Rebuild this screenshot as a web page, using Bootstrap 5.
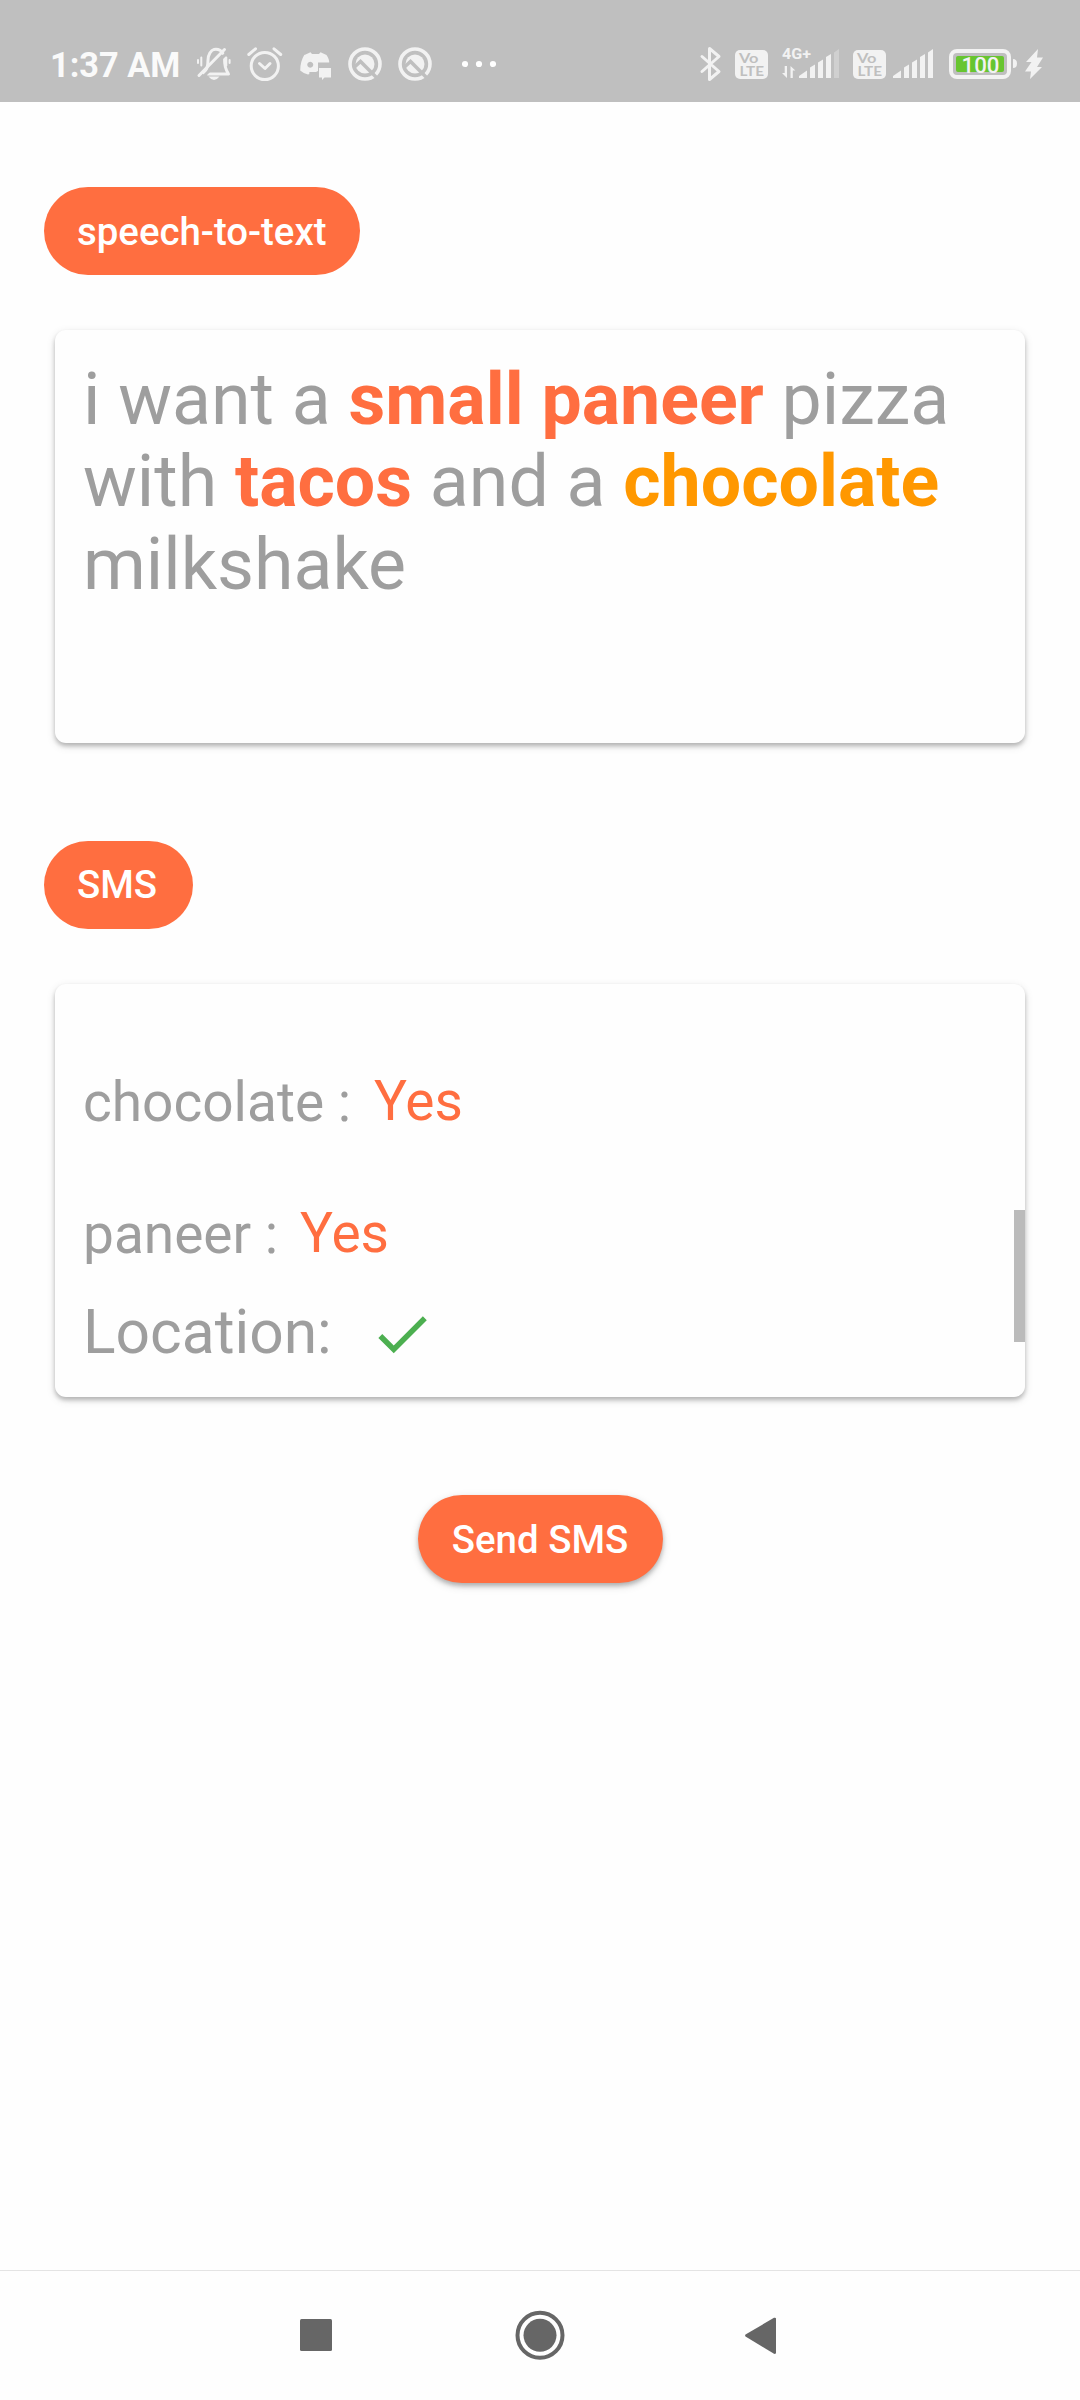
<!DOCTYPE html>
<html lang="en">
<head>
<meta charset="utf-8">
<meta name="viewport" content="width=device-width, initial-scale=1">
<title>Speech to SMS</title>
<link href="https://cdn.jsdelivr.net/npm/bootstrap@5.3.0/dist/css/bootstrap.min.css" rel="stylesheet">
<style>
  body { font-family: Roboto, "Liberation Sans", sans-serif; background: #fefefe; color: #9e9e9e; }
  .screen { height: 2400px; overflow: hidden; }
  .status { height: 102px; background: #bfbfbf; padding: 42px 36px 0 50px; }
  .status svg { display: block; height: 44px; fill: #f2f2f2; flex: none; }
  .clock { font-size: 34.3px; font-weight: 700; line-height: 40px; color: #fafafa; width: 146px; white-space: nowrap; margin-top: 3px; }
  .line { fill: none; stroke: #f2f2f2; stroke-width: 3; stroke-linecap: round; stroke-linejoin: round; }
  .gap { stroke: #bfbfbf; fill: none; }
  .gap-6 { margin-left: 6px; }
  .gap-13 { margin-left: 13px; }
  .gap-14 { margin-left: 14px; }
  .gap-15 { margin-left: 15px; }
  .gap-17 { margin-left: 17px; }
  .gap-30 { margin-left: 30px; }
  .content-area { padding-top: 85px; }
  .pill { height: 88px; line-height: 89px; padding: 0 33px; border-radius: 44px; background: #ff6e40; color: #fff; font-size: 38.4px; font-weight: 500; margin-left: 44px; border: 0; white-space: nowrap; }
  .pill-speech { width: 316px; }
  .pill-sms { width: 148.5px; margin-top: 98.8px; line-height: 88px; }
  .panel { margin: 54.5px 55px 0; height: 413px; border: 0; border-radius: 11px; background: #fefefe; padding: 0 28px;
    box-shadow: 0 3px 4px rgba(0,0,0,.22), 0 3px 10px rgba(0,0,0,.12); }
  .spoken { font-size: 71.65px; line-height: 82.5px; margin: 0; padding-top: 29px; }
  .hit { color: #ff6e40; }
  .spoken .hit, .drink { font-weight: 700; }
  .drink { color: #ff9800; }
  .results { padding-top: 85px; }
  .entry { font-size: 55px; line-height: 66px; height: 132px; }
  .entry-last { height: 99px; }
  .entry .hit { margin: -1px 0 0 23px; }
  .entry-last .hit { margin-left: 22px; }
  .place { font-size: 60.5px; line-height: 66px; }
  .check { margin: 1px 0 0 37px; }
  .thumb { width: 11px; height: 132.5px; top: 226px; right: 0; background: #bbb; }
  .send { width: 245px; padding: 0 32px; margin-left: 0; margin-top: 98.5px; box-shadow: 0 3px 4px rgba(0,0,0,.22), 0 3px 10px rgba(0,0,0,.14); }
  .sysnav { height: 130px; border-top: 1px solid #e4e4e4; padding: 38px 295px 0 292px; }
  .sysnav svg { display: block; fill: #666; }
</style>
</head>
<body>
<div class="screen d-flex flex-column">
  <header class="status d-flex align-items-start">
    <div class="clock">1:37 AM</div>
    <svg width="36" viewBox="196 42 36 44" aria-label="Muted">
      <path class="line" d="M204 73c3-3 4-6 4-13 0-5 3-10 6-10.600q6-1 9 4M224.500 57c0 9 1 12 4 17H208"/>
      <path class="line" style="stroke-width:2" d="M198 60v3M201.300 57.500v8M226.300 57.500v8M229.600 60v3"/>
      <path d="M208.500 76.500h11q-5.500 7-11 0z"/>
      <path class="gap" stroke-width="3" d="M202 78 227 53"/>
      <path class="line" d="M199 75.500 224.500 49.500"/>
    </svg>
    <svg class="gap-15" width="36" viewBox="247 42 36 44" aria-label="Alarm">
      <circle class="line" cx="264.800" cy="66" r="13.600"/>
      <path class="line" d="M259.500 63.500 265 68.500 270 63.500"/>
      <path class="line" d="M248.800 54.500 255.500 48.800M274 48.800 280.700 54.500"/>
    </svg>
    <svg class="gap-17" width="32" viewBox="300 42 32 44" aria-label="Discord">
      <path fill-rule="evenodd" d="M304.500 55 310.500 52.300 312 54h7l1.500-1.700 6 2.700q3 4.500 2.700 7.500H318v8.500l-2 1h-6l-1 .8.500 1.200-1.500.500q-5-1.300-7.800-4 0-9 4.300-16zM310.200 61.800a3 3 0 1 0 .1 0z"/>
      <path d="M319 68h12v9.500h-6.500L322 80v-2.500h-3z"/>
    </svg>
    <svg class="ms-3" width="34" viewBox="348 42 34 44">
      <g id="q"><circle class="line" style="stroke-width:3.600" cx="365" cy="64" r="15"/><circle cx="365" cy="64" r="9.500"/>
      <path class="gap" stroke-width="3.500" d="M354 67.500 360.500 61.500 379 80"/></g>
    </svg>
    <svg class="ms-3" width="34" viewBox="348 42 34 44"><use href="#q"/></svg>
    <svg class="gap-30" width="34" viewBox="462 42 34 44"><g fill="#fff"><circle cx="465" cy="64" r="3.100"/><circle cx="479" cy="64" r="3.100"/><circle cx="493" cy="64" r="3.100"/></g></svg>
    <svg class="ms-auto" width="23" viewBox="699 42 23 44" aria-label="Bluetooth"><path class="line" d="M702 56.500 719 71.500 709.500 79.500V48.500L719 56.500 702 71.500"/></svg>
    <svg class="gap-13" width="33" viewBox="735 42 33 44">
      <g id="volte"><rect x="735" y="50" width="33" height="29" rx="5"/>
      <g fill="#bfbfbf" font-family="Lato, sans-serif" font-weight="700"><text x="739" y="62.500" font-size="13.500" textLength="19.500" lengthAdjust="spacingAndGlyphs">Vo</text><text x="739.500" y="75.500" font-size="13.500" textLength="24.500" lengthAdjust="spacingAndGlyphs">LTE</text></g></g>
    </svg>
    <svg class="gap-13" width="59" viewBox="781 42 59 44">
      <text x="782" y="58.800" font-size="15.500" font-weight="700" textLength="29" lengthAdjust="spacingAndGlyphs">4G+</text>
      <path d="M784.700 66h2.300v12l-5-5h2.700zM790.500 78h2.300v-7.500h2.500l-4.800-4.500z"/>
      <g id="bars"><path d="M799 78v-2l8-5.500V78zM810 78V67.500l5-3V78zM818 78V62.500l5-3V78zM826 78V57l5-3V78z"/></g>
      <path opacity=".35" d="M834 78V52.500l5-3.500V78z"/>
    </svg>
    <svg class="gap-13" width="33" viewBox="735 42 33 44"><use href="#volte"/></svg>
    <svg class="gap-6" width="42" viewBox="798 42 42 44"><use href="#bars"/><path d="M834 78V52.500l5-3.500V78z"/></svg>
    <svg class="gap-14" width="70" viewBox="948 42 70 44" aria-label="Battery">
      <rect x="951" y="51" width="58" height="26" rx="6" fill="none" stroke="#f2f2f2" stroke-width="4"/>
      <rect x="956" y="56" width="48" height="16" rx="2" fill="#67c52f"/>
      <path d="M1013 59q4 0 4 4.500t-4 4.500z"/>
      <text x="961.500" y="72.500" font-size="22.500" font-weight="500" textLength="38" lengthAdjust="spacingAndGlyphs">100</text>
    </svg>
    <svg class="gap-6" width="20" viewBox="1024 42 20 44"><path d="M1038 49 1026 62h5.500L1025 71.500h6L1030 79l12-12h-5l6-9.500h-6z"/></svg>
  </header>

  <main class="content-area flex-grow-1">
    <span class="pill pill-speech d-block">speech-to-text</span>
    <section class="card panel">
      <p class="spoken">i want a <span class="hit">small paneer</span> pizza with <span class="hit">tacos</span> and a <span class="drink">chocolate</span> milkshake</p>
    </section>
    <span class="pill pill-sms d-block">SMS</span>
    <section class="card panel results position-relative">
      <div class="entry d-flex"><span>chocolate :</span><span class="hit">Yes</span></div>
      <div class="entry entry-last d-flex"><span>paneer :</span><span class="hit">Yes</span></div>
      <div class="place d-flex"><span>Location:</span>
        <svg class="check" width="66" height="66" viewBox="0 0 24 24" fill="#4caf50"><path d="M9 16.170 4.830 12l-1.420 1.410L9 19 21 7l-1.410-1.410z"/></svg></div>
      <div class="thumb position-absolute"></div>
    </section>
    <div class="text-center"><button class="pill send">Send SMS</button></div>
  </main>

  <nav class="sysnav d-flex justify-content-between">
    <svg width="48" height="52" viewBox="292 2309 48 52"><rect x="300" y="2319" width="32" height="32" rx="1.500"/></svg>
    <svg width="52" height="52" viewBox="513.500 2309 52 52"><circle cx="540.500" cy="2335.300" r="22.500" fill="none" stroke="#666" stroke-width="4"/><circle cx="540.500" cy="2335.300" r="16.500"/></svg>
    <svg width="48" height="52" viewBox="737 2309 48 52"><path d="M745.500 2334.500 774 2317.800q2-.5 2 1v34q0 1.500-2 1L745.500 2336.500q-.8-1 0-2z"/></svg>
  </nav>
</div>
<script src="https://cdn.jsdelivr.net/npm/bootstrap@5.3.0/dist/js/bootstrap.bundle.min.js"></script>
</body>
</html>
